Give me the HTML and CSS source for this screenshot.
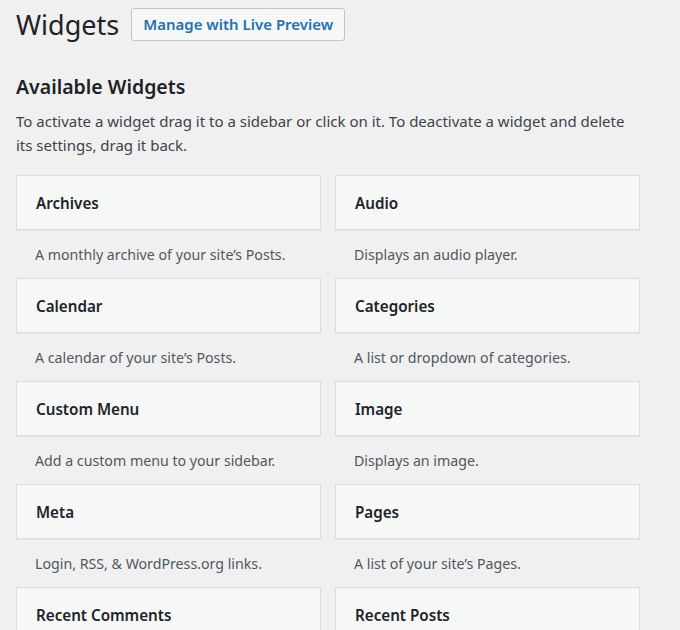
FILE: index.html
```html
<!DOCTYPE html>
<html lang="en">
<head>
<meta charset="utf-8">
<title>Widgets</title>
<link rel="stylesheet" href="styles.css">
</head>
<body>
<div class="wrap">
  <div class="header">
    <h1 class="page-title">Widgets</h1>
    <a class="page-action" href="#">Manage with Live Preview</a>
  </div>
  <h2 class="section-title">Available Widgets</h2>
  <p class="section-desc">To activate a widget drag it to a sidebar or click on it. To deactivate a widget and delete its settings, drag it back.</p>
  <div class="widget-grid">
    <div class="widget"><div class="widget-top">Archives</div><div class="widget-desc">A monthly archive of your site’s Posts.</div></div>
    <div class="widget"><div class="widget-top">Audio</div><div class="widget-desc">Displays an audio player.</div></div>
    <div class="widget"><div class="widget-top">Calendar</div><div class="widget-desc">A calendar of your site’s Posts.</div></div>
    <div class="widget"><div class="widget-top">Categories</div><div class="widget-desc">A list or dropdown of categories.</div></div>
    <div class="widget"><div class="widget-top">Custom Menu</div><div class="widget-desc">Add a custom menu to your sidebar.</div></div>
    <div class="widget"><div class="widget-top">Image</div><div class="widget-desc">Displays an image.</div></div>
    <div class="widget"><div class="widget-top">Meta</div><div class="widget-desc">Login, RSS, &amp; WordPress.org links.</div></div>
    <div class="widget"><div class="widget-top">Pages</div><div class="widget-desc">A list of your site’s Pages.</div></div>
    <div class="widget"><div class="widget-top">Recent Comments</div><div class="widget-desc">Your site’s most recent comments.</div></div>
    <div class="widget"><div class="widget-top">Recent Posts</div><div class="widget-desc">Your site’s most recent Posts.</div></div>
  </div>
</div>
</body>
</html>
```

FILE: styles.css
```css
html, body {
  margin: 0;
  padding: 0;
  background: #f0f0f1;
  overflow: hidden;
}
body {
  font-family: "Noto Sans", "Open Sans", sans-serif;
  color: #1d2327;
}
.wrap {
  padding: 0 16px;
}
.header {
  display: flex;
  align-items: center;
  gap: 12px;
  height: 49px;
}
.page-title {
  margin: 0;
  font-size: 27px;
  font-weight: 400;
  line-height: 49px;
  color: #1d2327;
}
.page-action {
  display: block;
  box-sizing: border-box;
  height: 33px;
  line-height: 31px;
  padding: 0 11px;
  border: 1px solid #c3c4c7;
  border-radius: 3px;
  background: #f6f7f7;
  color: #2271b1;
  font-size: 15px;
  font-weight: 600;
  text-decoration: none;
  margin-top: -1px;
}
.section-title {
  margin: 22px 0 0;
  font-size: 19.5px;
  font-weight: 600;
  line-height: 32px;
  color: #1d2327;
}
.section-desc {
  margin: 6px 0 0;
  font-size: 15px;
  line-height: 24px;
  color: #3c434a;
  max-width: 625px;
}
.widget-grid {
  margin-top: 18px;
  display: grid;
  grid-template-columns: 305px 305px;
  column-gap: 14px;
}
.widget-top {
  box-sizing: border-box;
  height: 55px;
  padding: 0 19px;
  line-height: 55px;
  background: #f6f7f7;
  border: 1px solid #dcdcde;
  box-shadow: 0 1px 1px rgba(0, 0, 0, 0.04);
  font-size: 15.2px;
  font-weight: 600;
  color: #1d2327;
}
.widget-desc {
  height: 48px;
  padding: 0 19px;
  line-height: 50px;
  font-size: 14.2px;
  color: #50575e;
}
```
